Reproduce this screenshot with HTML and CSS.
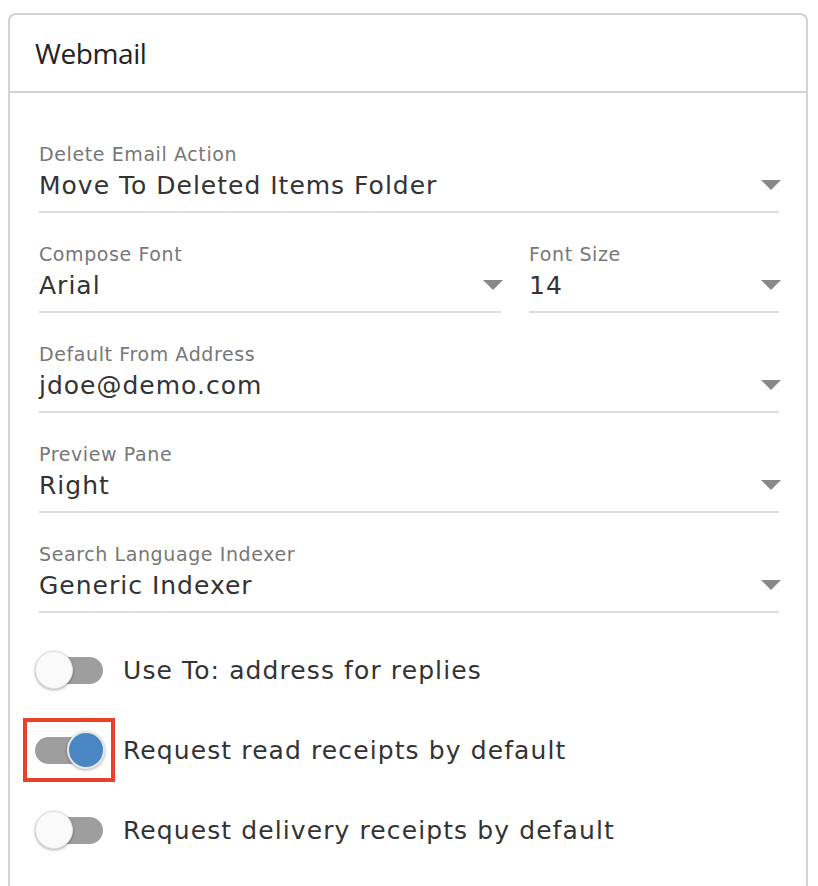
FILE: index.html
```html
<!DOCTYPE html>
<html>
<head>
<meta charset="utf-8">
<link rel="stylesheet" href="styles.css">
</head>
<body>
<div class="card">
  <div class="card-header">Webmail</div>
  <div class="card-body">
    <div class="field">
      <div class="label">Delete Email Action</div>
      <div class="select"><span class="value">Move To Deleted Items Folder</span><span class="caret"></span></div>
    </div>
    <div class="field-row">
      <div class="field grow">
        <div class="label">Compose Font</div>
        <div class="select"><span class="value">Arial</span><span class="caret"></span></div>
      </div>
      <div class="field size">
        <div class="label">Font Size</div>
        <div class="select"><span class="value">14</span><span class="caret"></span></div>
      </div>
    </div>
    <div class="field">
      <div class="label">Default From Address</div>
      <div class="select"><span class="value">jdoe@demo.com</span><span class="caret"></span></div>
    </div>
    <div class="field">
      <div class="label">Preview Pane</div>
      <div class="select"><span class="value">Right</span><span class="caret"></span></div>
    </div>
    <div class="field last">
      <div class="label">Search Language Indexer</div>
      <div class="select"><span class="value">Generic Indexer</span><span class="caret"></span></div>
    </div>
    <div class="toggles">
      <div class="toggle-row">
        <span class="switch"><span class="knob"></span></span>
        <span class="toggle-label">Use To: address for replies</span>
      </div>
      <div class="toggle-row">
        <span class="switch on"><span class="knob"></span><span class="highlight"></span></span>
        <span class="toggle-label">Request read receipts by default</span>
      </div>
      <div class="toggle-row">
        <span class="switch"><span class="knob"></span></span>
        <span class="toggle-label">Request delivery receipts by default</span>
      </div>
    </div>
  </div>
</div>
</body>
</html>
```
FILE: styles.css
```css
html, body {
  margin: 0;
  padding: 0;
  background: #fff;
}
body {
  font-family: "DejaVu Sans", "Open Sans", sans-serif;
  color: #333;
  padding: 13px 10px 0 8px;
  height: 886px;
  box-sizing: border-box;
  overflow: hidden;
}
.card {
  border: 2px solid #d2d2d2;
  border-bottom: none;
  border-radius: 8px 8px 0 0;
  height: 900px;
  box-sizing: border-box;
}
.card-header {
  height: 78px;
  box-sizing: border-box;
  padding-left: 25px;
  display: flex;
  align-items: center;
  font-family: "Open Sans", sans-serif;
  font-size: 28px;
  color: #222;
  border-bottom: 2px solid #d2d2d2;
  letter-spacing: -0.4px;
}
.card-body {
  padding: 50px 27px 0 29px;
}
.field {
  margin-bottom: 30px;
}
.field.last {
  margin-bottom: 17px;
}
.label {
  font-size: 19px;
  line-height: 22px;
  letter-spacing: 0.6px;
  color: #777;
}
.select {
  display: flex;
  align-items: center;
  justify-content: space-between;
  border-bottom: 2px solid #ddd;
  height: 48px;
  box-sizing: border-box;
  padding-bottom: 6px;
}
.value {
  font-size: 25px;
  letter-spacing: 1px;
  color: #333;
}
.caret {
  width: 0;
  height: 0;
  border-left: 10px solid transparent;
  border-right: 10px solid transparent;
  border-top: 10px solid #888;
  margin-right: -2px;
}
.field-row {
  display: flex;
  gap: 28px;
}
.field-row .grow {
  flex: 1;
}
.field-row .size {
  width: 250px;
}
.toggles {
  display: flex;
  flex-direction: column;
}
.toggle-row {
  display: flex;
  align-items: center;
  height: 80px;
}
.switch {
  position: relative;
  width: 68px;
  height: 27px;
  border-radius: 14px;
  background: #9e9e9e;
  margin-left: -4px;
  margin-right: 20px;
  flex: none;
}
.knob {
  position: absolute;
  top: -6px;
  left: 0;
  width: 38px;
  height: 38px;
  box-sizing: border-box;
  border-radius: 50%;
  background: #fafafa;
  border: 1px solid #e3e3e3;
  box-shadow: 0 1px 3px rgba(0,0,0,0.35);
}
.switch.on .knob {
  left: 32px;
  background: #4a87c2;
  border: 2px solid #e8e8e8;
}
.highlight {
  position: absolute;
  left: -12px;
  top: -19px;
  width: 92px;
  height: 64px;
  box-sizing: border-box;
  border: 4px solid #e8402b;
}
.toggle-label {
  font-size: 25px;
  letter-spacing: 1.1px;
  color: #333;
}
```
